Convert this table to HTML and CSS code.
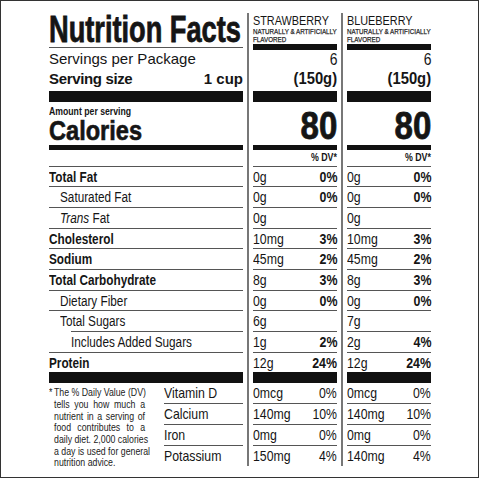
FILE: index.html
```html
<!DOCTYPE html>
<html lang="en">
<head>
  <meta charset="UTF-8">
  <meta name="viewport" content="width=device-width, initial-scale=1.0">
  <title>Nutrition Facts</title>
  <link rel="stylesheet" href="styles.css">
</head>
<body>
  <div class="label">
    <div class="col col-main">
      <div class="title"><span>Nutrition Facts</span></div>
      <div class="servings">Servings per Package</div>
      <div class="size"><span>Serving size</span><span>1 cup</span></div>
      <div class="bar bar-thick"></div>
      <div class="cal-block">
        <div class="amount"><span>Amount per serving</span></div>
        <div class="calories"><span>Calories</span></div>
      </div>
      <div class="bar bar-mid"></div>
      <div class="dv-row"></div>
      <div class="row bold"><span>Total Fat</span></div>
      <div class="row indent"><span>Saturated Fat</span></div>
      <div class="row indent"><span><i>Trans</i> Fat</span></div>
      <div class="row bold"><span>Cholesterol</span></div>
      <div class="row bold"><span>Sodium</span></div>
      <div class="row bold"><span>Total Carbohydrate</span></div>
      <div class="row indent"><span>Dietary Fiber</span></div>
      <div class="row indent sugars"><span>Total Sugars</span></div>
      <div class="row indent2"><span>Includes Added Sugars</span></div>
      <div class="row bold last"><span>Protein</span></div>
      <div class="bar bar-thick"></div>
      <div class="foot">
        <div class="note">
          <div class="nl first"><span class="star">*</span>The % Daily Value (DV)</div>
          <div class="nl">tells you how much a</div>
          <div class="nl">nutrient in a serving of</div>
          <div class="nl">food contributes to a</div>
          <div class="nl">daily diet. 2,000 calories</div>
          <div class="nl">a day is used for general</div>
          <div class="nl end">nutrition advice.</div>
        </div>
        <div class="vits">
          <div class="vrow"><span>Vitamin D</span></div>
          <div class="vrow"><span>Calcium</span></div>
          <div class="vrow"><span>Iron</span></div>
          <div class="vrow last"><span>Potassium</span></div>
        </div>
      </div>
    </div>

    <div class="col col-flavor">
      <div class="flavor">
        <div class="fname"><span>STRAWBERRY</span></div>
        <div class="fsub"><span>NATURALLY &amp; ARTIFICIALLY<br>FLAVORED</span></div>
      </div>
      <div class="bar bar-top"></div>
      <div class="count"><span>6</span></div>
      <div class="grams"><span>(150g)</span></div>
      <div class="bar bar-thick"></div>
      <div class="kcal"><span>80</span></div>
      <div class="bar bar-mid"></div>
      <div class="dv-row dv-label"><span>% DV*</span></div>
      <div class="row val"><span>0g</span><b>0%</b></div>
      <div class="row val"><span>0g</span><b>0%</b></div>
      <div class="row val"><span>0g</span></div>
      <div class="row val"><span>10mg</span><b>3%</b></div>
      <div class="row val"><span>45mg</span><b>2%</b></div>
      <div class="row val"><span>8g</span><b>3%</b></div>
      <div class="row val"><span>0g</span><b>0%</b></div>
      <div class="row val"><span>6g</span></div>
      <div class="row val"><span>1g</span><b>2%</b></div>
      <div class="row val last"><span>12g</span><b>24%</b></div>
      <div class="bar bar-thick"></div>
      <div class="vrow val"><span>0mcg</span><span>0%</span></div>
      <div class="vrow val"><span>140mg</span><span>10%</span></div>
      <div class="vrow val"><span>0mg</span><span>0%</span></div>
      <div class="vrow val last"><span>150mg</span><span>4%</span></div>
    </div>

    <div class="col col-flavor">
      <div class="flavor">
        <div class="fname"><span>BLUEBERRY</span></div>
        <div class="fsub"><span>NATURALLY &amp; ARTIFICIALLY<br>FLAVORED</span></div>
      </div>
      <div class="bar bar-top"></div>
      <div class="count"><span>6</span></div>
      <div class="grams"><span>(150g)</span></div>
      <div class="bar bar-thick"></div>
      <div class="kcal"><span>80</span></div>
      <div class="bar bar-mid"></div>
      <div class="dv-row dv-label"><span>% DV*</span></div>
      <div class="row val"><span>0g</span><b>0%</b></div>
      <div class="row val"><span>0g</span><b>0%</b></div>
      <div class="row val"><span>0g</span></div>
      <div class="row val"><span>10mg</span><b>3%</b></div>
      <div class="row val"><span>45mg</span><b>2%</b></div>
      <div class="row val"><span>8g</span><b>3%</b></div>
      <div class="row val"><span>0g</span><b>0%</b></div>
      <div class="row val"><span>7g</span></div>
      <div class="row val"><span>2g</span><b>4%</b></div>
      <div class="row val last"><span>12g</span><b>24%</b></div>
      <div class="bar bar-thick"></div>
      <div class="vrow val"><span>0mcg</span><span>0%</span></div>
      <div class="vrow val"><span>140mg</span><span>10%</span></div>
      <div class="vrow val"><span>0mg</span><span>0%</span></div>
      <div class="vrow val last"><span>140mg</span><span>4%</span></div>
    </div>
  </div>
</body>
</html>
```

FILE: styles.css
```css
body {
  margin: 0;
  padding: 0;
  background: white;
  color: #151515;
  font-family: "Liberation Sans", Arial, sans-serif;
}

/* Liberation Sans squeezed sideways to look like a condensed face */
.title span,
.amount span,
.calories span,
.row span,
.vrow span,
.val b,
.fname span,
.fsub span,
.count span,
.grams span,
.kcal span,
.dv-label span {
  display: inline-block;
  white-space: nowrap;
  transform-origin: left center;
}

.label {
  box-sizing: border-box;
  width: 479px;
  height: 478px;
  border: 1px solid #333;
  padding: 12px 0 0 48px;
  display: flex;
  align-items: flex-start;
}

.col-main {
  width: 194px;
}

.col-flavor {
  width: 84px;
  margin-left: 4px;
  padding-left: 4px;
  border-left: 2px solid #777;
  height: 453px;
}

/* header, left */
.title {
  box-sizing: border-box;
  height: 35px;
  line-height: 33px;
  font-size: 37px;
  font-weight: bold;
  white-space: nowrap;
  border-bottom: 1px solid #555;
}

.title span {
  transform: scaleX(0.735);
  -webkit-text-stroke: 0.8px #151515;
}

.servings {
  font-size: 15px;
  line-height: 22px;
}

.size {
  display: flex;
  justify-content: space-between;
  height: 21px;
  line-height: 18px;
  font-size: 15px;
  font-weight: bold;
}

.size span:first-child {
  letter-spacing: -0.35px;
}

.bar {
  background: #111;
}

.bar-top {
  height: 6px;
}

.bar-thick {
  height: 11px;
}

.bar-mid {
  height: 5px;
}

.cal-block {
  box-sizing: border-box;
  height: 43px;
  padding-top: 2px;
  font-weight: bold;
}

.amount {
  font-size: 11px;
  line-height: 14px;
}

.amount span {
  transform: scaleX(0.79);
}

.calories {
  font-size: 27px;
  line-height: 27px;
}

.calories span {
  transform: scaleX(0.873);
  -webkit-text-stroke: 0.6px #151515;
}

.dv-row {
  box-sizing: border-box;
  height: 16.5px;
  border-bottom: 1px solid #555;
}

.dv-label {
  text-align: right;
  font-size: 10.5px;
  font-weight: bold;
  line-height: 15.5px;
}

.dv-label span {
  transform-origin: right center;
  transform: scaleX(0.84);
}

/* nutrient rows */
.row {
  box-sizing: border-box;
  height: 20.7px;
  padding-top: 1px;
  line-height: 18.7px;
  font-size: 14px;
  border-bottom: 1px solid #555;
  white-space: nowrap;
}

.row span {
  transform: scaleX(0.84);
}

.row.last {
  height: 19.5px;
  border-bottom: 0;
}

.bold {
  font-weight: bold;
}

.indent {
  padding-left: 11px;
}

.indent2 {
  padding-left: 22px;
}

.sugars {
  border-bottom: 0;
  background: linear-gradient(#555, #555) no-repeat 22px 100% / calc(100% - 22px) 1px;
}

.val {
  display: flex;
  justify-content: space-between;
  font-size: 15px;
}

.val span {
  transform: scaleX(0.82);
}

.val b {
  font-size: 15.5px;
  transform-origin: right center;
  transform: scaleX(0.8);
}

.val span + span {
  transform-origin: right center;
}

/* flavor header */
.flavor {
  height: 31px;
}

.fname {
  font-size: 13px;
  line-height: 14px;
  padding-top: 1px;
}

.fname span {
  transform: scaleX(0.835);
}

.fsub {
  font-size: 8px;
  line-height: 7.7px;
  color: #222;
}

.fsub span {
  transform: scaleX(0.78);
  -webkit-text-stroke: 0.25px #222;
}

.count {
  text-align: right;
  font-size: 17px;
  line-height: 20px;
}

.count span {
  transform-origin: right center;
  transform: scaleX(0.82);
}

.grams {
  text-align: right;
  height: 21px;
  font-size: 17px;
  font-weight: bold;
  line-height: 18px;
}

.grams span {
  transform-origin: right center;
  transform: scaleX(0.87);
}

.kcal {
  box-sizing: border-box;
  height: 43px;
  padding-top: 5px;
  text-align: right;
  font-size: 38px;
  font-weight: bold;
  line-height: 38px;
}

.kcal span {
  transform-origin: right center;
  transform: scaleX(0.87);
  -webkit-text-stroke: 0.8px #151515;
}

/* footnote + vitamins */
.foot {
  display: flex;
}

.note {
  flex: none;
  box-sizing: border-box;
  width: 115px;
  padding: 4px 0 0 6px;
  font-size: 10.5px;
  line-height: 11.7px;
  color: #222;
  transform-origin: left top;
  transform: scaleX(0.835);
}

.nl {
  text-align: justify;
  text-align-last: justify;
  white-space: nowrap;
}

.nl.first {
  margin-left: -6px;
}

.nl.end {
  text-align-last: left;
}

.star {
  display: inline-block;
  width: 6px;
}

.vits {
  width: 79px;
}

.vrow {
  box-sizing: border-box;
  height: 21px;
  line-height: 20px;
  font-size: 15px;
  border-bottom: 1px solid #555;
}

.vits .vrow span {
  transform: scaleX(0.82);
}

.vrow.last {
  border-bottom: 0;
}
```
